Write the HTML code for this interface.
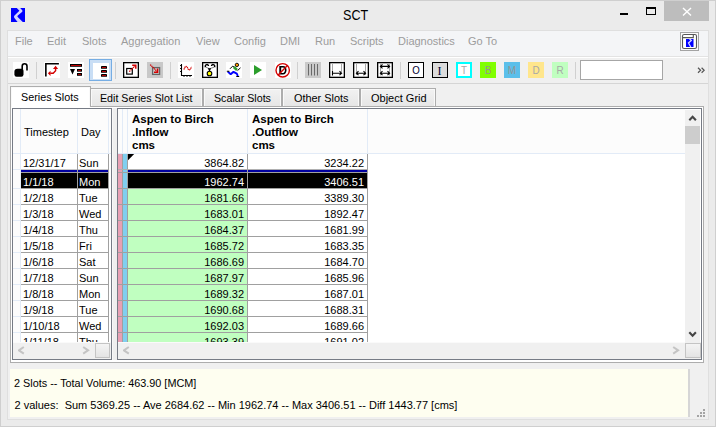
<!DOCTYPE html>
<html><head><meta charset="utf-8">
<style>
*{box-sizing:border-box;margin:0;padding:0}
html,body{width:716px;height:427px;overflow:hidden;background:#ebebeb;font-family:"Liberation Sans",sans-serif;}
.a{position:absolute}
.t{position:absolute;white-space:nowrap;line-height:1}
#win{left:0;top:0;width:716px;height:427px;border:1px solid #cfcfcf;}
.menu{font-size:11px;color:#9c9c9c;top:36px}
.sep{position:absolute;width:1px;background:#cfcfcf;top:62px;height:16px}
.ico{position:absolute;top:62px;width:16px;height:16px}
.tab{position:absolute;border:1px solid #adadad;border-bottom:none;background:linear-gradient(#f2f2f2,#e6e6e6);box-shadow:inset 1px 1px #f9f9f9,inset -1px 0 #f9f9f9;font-size:11px;color:#000}
.tab span{position:absolute;white-space:nowrap;line-height:1}
.grid{position:absolute;border:1px solid #767b85;background:#fff;overflow:hidden}
.hline{position:absolute;height:1px;background:#a0a0a0}
.vline{position:absolute;width:1px;background:#a0a0a0}
.cell{position:absolute;font-size:11px;white-space:nowrap;line-height:1}
</style></head><body>
<div id="win" class="a"></div>

<!-- title bar -->
<svg class="a" style="left:10px;top:7px" width="16" height="16" viewBox="0 0 16 16">
<rect x="1" y="1" width="14" height="14" fill="#0000ff"/>
<path d="M6.8 1 L10.2 1 L12.4 3.4 Q12.8 4.3 12 5 L7.8 8.4 Q7 9.2 7.7 10 L12.8 15 L7.6 15 L4.4 11 Q3.4 9.6 4.5 8.4 L9.4 3.8 Z" fill="#d6d6ff"/>
</svg>
<div class="t" style="left:343px;top:7px;font-size:15px;color:#000;transform:scaleX(0.84);transform-origin:0 0">SCT</div>
<div class="a" style="left:620px;top:13px;width:8px;height:2px;background:#000"></div>
<div class="a" style="left:646px;top:7px;width:10px;height:8px;border:1px solid #000;border-top-width:2px"></div>
<div class="a" style="left:664px;top:1px;width:45px;height:20px;background:#bdbdbd"></div>
<svg class="a" style="left:682px;top:7px" width="10" height="9" viewBox="0 0 10 9"><path d="M1 1 L9 8.5 M9 1 L1 8.5" stroke="#fff" stroke-width="1.4"/></svg>

<!-- menu bar -->
<div class="a" style="left:7px;top:30px;width:702px;height:390px;background:#f0f0f0;border:1px solid #dfdfdf"></div>
<div class="a" style="left:8px;top:31px;width:700px;height:25px;background:#f4f5f7"></div>
<div class="a" style="left:8px;top:56px;width:700px;height:1px;background:#e3e3e3"></div>
<div class="a" style="left:8px;top:57px;width:700px;height:1px;background:#fff"></div>
<div class="t menu" style="left:15px">File</div>
<div class="t menu" style="left:47px">Edit</div>
<div class="t menu" style="left:82px">Slots</div>
<div class="t menu" style="left:121px">Aggregation</div>
<div class="t menu" style="left:196px">View</div>
<div class="t menu" style="left:234px">Config</div>
<div class="t menu" style="left:280px">DMI</div>
<div class="t menu" style="left:315px">Run</div>
<div class="t menu" style="left:350px">Scripts</div>
<div class="t menu" style="left:398px">Diagnostics</div>
<div class="t menu" style="left:468px">Go To</div>
<div class="a" style="left:680px;top:32px;width:19px;height:19px;border:1px solid #a3a3a3;background:#fbfbfb"></div>
<svg class="a" style="left:681px;top:33px" width="17" height="17" viewBox="0 0 17 17"><rect x="1.5" y="1.5" width="14" height="14" rx="1.6" fill="#fff" stroke="#585858" stroke-width="1.1"/><path d="M1.5 4.6 H12.3 V1.5" stroke="#585858" stroke-width="1.1" fill="none"/><rect x="5" y="6" width="7.5" height="8" fill="#0000ff"/><path d="M8.6 6 L10.3 7.6 L7.5 10 L9.8 14" stroke="#d6d6ff" stroke-width="1.3" fill="none"/></svg>

<!-- toolbar -->
<div class="a" style="left:8px;top:83px;width:700px;height:1px;background:#d5d5d5"></div>
<div id="toolbar">
<div class="a" style="left:36px;top:62px;width:1px;height:17px;background:#d0d0d0"></div>
<div class="a" style="left:115px;top:62px;width:1px;height:17px;background:#d0d0d0"></div>
<div class="a" style="left:170px;top:62px;width:1px;height:17px;background:#d0d0d0"></div>
<div class="a" style="left:297px;top:62px;width:1px;height:17px;background:#d0d0d0"></div>
<div class="a" style="left:400px;top:62px;width:1px;height:17px;background:#d0d0d0"></div>
<div class="a" style="left:575px;top:62px;width:1px;height:17px;background:#d0d0d0"></div>
<svg class="a" style="left:13px;top:62px" width="16" height="16" viewBox="0 0 16 16"><rect width="16" height="16" fill="#fff"/><path d="M9.2 7.5 V4.2 A2.4 2.4 0 0 1 14 4.2 V8.6" stroke="#000" stroke-width="1.6" fill="none"/><path d="M4.5 6.7 H8.5 Q10.5 6.7 10.5 8.7 V12.6 Q10.5 14.8 8.3 14.8 H3.6 Q1.4 14.8 1.4 12.6 V10 Q1.4 6.7 4.5 6.7 Z" fill="#000"/></svg>
<svg class="a" style="left:44px;top:62px" width="16" height="16" viewBox="0 0 16 16"><rect width="16" height="16" fill="#fff"/><path d="M1.85 14.6 V1.75 H14.9" stroke="#000" stroke-width="1.6" fill="none"/><path d="M11.6 6.5 V8.8 L9.2 11.3 H6.3" stroke="#d40000" stroke-width="1.4" fill="none"/><path d="M9 6.9 L11.6 3.8 L14.1 6.9 Z M6.5 8.8 L3.9 11.35 L6.5 13.9 Z" fill="#d40000"/></svg>
<svg class="a" style="left:68px;top:62px" width="16" height="16" viewBox="0 0 16 16"><rect width="16" height="16" fill="#fff"/><rect x="2" y="2" width="12" height="2.8" fill="#000"/><rect x="3" y="3" width="10" height="0.9" fill="#d40000"/><path d="M2 7 H7 L4.5 12.5 Z" fill="#000"/><rect x="9" y="7" width="5" height="2.7" fill="#000"/><rect x="10" y="8" width="3" height="0.8" fill="#d40000"/><rect x="9" y="11" width="5" height="2.8" fill="#000"/><rect x="10" y="12" width="3" height="0.8" fill="#d40000"/></svg>
<div class="a" style="left:89px;top:59px;width:23px;height:22px;border:1px solid #76ade3;background:#c9def5"></div>
<svg class="a" style="left:93px;top:63px" width="16" height="16" viewBox="0 0 16 16"><rect width="16" height="16" fill="#fff"/><rect x="8" y="3" width="6" height="2.8" rx="0.4" fill="#000"/><rect x="9" y="4" width="4" height="0.9" fill="#d40000"/><rect x="8" y="7" width="6" height="2.8" rx="0.4" fill="#000"/><rect x="9" y="8" width="4" height="0.9" fill="#d40000"/><rect x="8" y="11" width="6" height="2.8" rx="0.4" fill="#000"/><rect x="9" y="12" width="4" height="0.9" fill="#d40000"/></svg>
<svg class="a" style="left:123px;top:62px" width="16" height="16" viewBox="0 0 16 16"><rect width="16" height="16" fill="#fff"/><rect x="0.65" y="0.65" width="14.7" height="14.7" stroke="#000" stroke-width="1.3" fill="none"/><rect x="3.7" y="6.5" width="5.6" height="5.6" stroke="#000" stroke-width="1.2" fill="none"/><path d="M6.3 9.6 L12.3 3.6" stroke="#d40000" stroke-width="1.3" stroke-dasharray="1.3 0.5"/><path d="M9.2 3.2 H12.8 V6.8" stroke="#d40000" stroke-width="1.5" fill="none"/></svg>
<svg class="a" style="left:147px;top:62px" width="16" height="16" viewBox="0 0 16 16"><rect width="16" height="16" fill="#c8c8c8"/><rect x="5.6" y="5.6" width="7" height="6.8" stroke="#646464" stroke-width="1.3" fill="#d0d0d0"/><path d="M3.2 2.6 L10 9.4" stroke="#d40000" stroke-width="1.3" stroke-dasharray="1.3 0.5"/><path d="M10.6 6.6 V10.2 H7" stroke="#d40000" stroke-width="1.5" fill="none"/></svg>
<svg class="a" style="left:178px;top:62px" width="16" height="16" viewBox="0 0 16 16"><rect width="16" height="16" fill="#fff"/><path d="M3.5 2 V13.5 H14" stroke="#000" stroke-width="1.1" fill="none"/><path d="M2 3.5 H3 M2 6.5 H3 M2 9.5 H3 M6 14 V15 M9 14 V15 M12 14 V15" stroke="#000" stroke-width="0.9" fill="none"/><path d="M5.8 7.6 C6.8 5.5 7.6 3.6 8.8 4.6 C9.8 5.6 10.2 8.6 11.6 7.8 C12.6 7.2 13 5.6 13.6 5" stroke="#d40000" stroke-width="1.2" fill="none" stroke-dasharray="1.4 0.4"/></svg>
<svg class="a" style="left:202px;top:62px" width="16" height="16" viewBox="0 0 16 16"><rect width="16" height="16" fill="#fff"/><rect x="0.65" y="0.65" width="14.7" height="14.7" stroke="#000" stroke-width="1.3" fill="none"/><path d="M3.4 5.2 C2.6 2.4 6.4 1.6 6.5 4 M12.6 5.2 C13.4 2.4 9.6 1.6 9.5 4" stroke="#000" stroke-width="1.4" fill="none"/><path d="M4 5.2 L7.5 6.8 L12 5.2" stroke="#777" stroke-width="0.9" fill="none"/><path d="M6 6.8 H9 M7.5 6.8 V9.5" stroke="#000" stroke-width="1.3" fill="none"/><circle cx="7.5" cy="11.5" r="2.3" fill="#ffff00" stroke="#000" stroke-width="1.1"/></svg>
<svg class="a" style="left:226px;top:62px" width="16" height="16" viewBox="0 0 16 16"><rect width="16" height="16" fill="#fff"/><path d="M4 6.8 L6.6 4.2 L8 5" stroke="#000" stroke-width="1" fill="none"/><path d="M11.5 8.6 L14.5 5.8" stroke="#000" stroke-width="1" fill="none"/><path d="M7.8 5 L11 8" stroke="#2e9a2e" stroke-width="2.6" fill="none"/><path d="M1.8 9.6 L4.7 12.3 L7.5 9.8 L10.8 11.6 L11.8 14" stroke="#0000ff" stroke-width="1.9" fill="none" stroke-linejoin="bevel"/><path d="M0.8 9.2 H3.4 M10.3 14.5 H13.2" stroke="#000" stroke-width="1.1" fill="none"/><circle cx="10.9" cy="2.9" r="1.7" fill="#ff9800" stroke="#000" stroke-width="0.9"/></svg>
<svg class="a" style="left:250px;top:62px" width="16" height="16" viewBox="0 0 16 16"><rect width="16" height="16" fill="#fff"/><path d="M4 3 L12 8 L4 13 Z" fill="#2c9e2c"/></svg>
<svg class="a" style="left:275px;top:62px" width="16" height="16" viewBox="0 0 16 16"><rect width="16" height="16" fill="#fff"/><path d="M4.3 4 H8 C13 4 12.5 12.5 8 12.5 H4.3 Z M6.2 5.6 V11 H8 C10.6 11 10.6 5.6 8 5.6 Z" fill="#000" fill-rule="evenodd"/><circle cx="7.7" cy="8.3" r="6.7" stroke="#d40000" stroke-width="1.4" fill="none"/><path d="M3.2 13 L12.4 3.6" stroke="#d40000" stroke-width="1.4"/></svg>
<svg class="a" style="left:305px;top:62px" width="16" height="16" viewBox="0 0 16 16"><rect width="16" height="16" fill="#cacaca"/><path d="M3.5 2 V13.5 M6.5 2 V13.5 M9.5 2 V13.5 M12.5 2 V13.5" stroke="#6a6a6a" stroke-width="1"/></svg>
<svg class="a" style="left:329px;top:62px" width="16" height="16" viewBox="0 0 16 16"><rect width="16" height="16" fill="#fff"/><rect x="0.65" y="0.65" width="14.7" height="14.7" stroke="#000" stroke-width="1.3" fill="none"/><path d="M3.5 2 V9 M12.5 2 V10" stroke="#a8a8a8" stroke-width="1"/><path d="M3.5 9 V13.5 M3.5 11.2 H12.5 M10.5 9.2 L12.6 11.2 L10.5 13.2" stroke="#000" stroke-width="1.1" fill="none"/></svg>
<svg class="a" style="left:353px;top:62px" width="16" height="16" viewBox="0 0 16 16"><rect width="16" height="16" fill="#fff"/><rect x="0.65" y="0.65" width="14.7" height="14.7" stroke="#000" stroke-width="1.3" fill="none"/><path d="M3.5 2 V13 M12.5 2 V13" stroke="#a8a8a8" stroke-width="1"/><path d="M3.5 11.2 H12.5 M5.5 9.2 L3.4 11.2 L5.5 13.2 M10.5 9.2 L12.6 11.2 L10.5 13.2" stroke="#000" stroke-width="1.1" fill="none"/></svg>
<svg class="a" style="left:377px;top:62px" width="16" height="16" viewBox="0 0 16 16"><rect width="16" height="16" fill="#fff"/><rect x="0.65" y="0.65" width="14.7" height="14.7" stroke="#000" stroke-width="1.3" fill="none"/><path d="M3.5 2 V13.5 M12.5 2 V13.5" stroke="#a8a8a8" stroke-width="1"/><path d="M3.5 4.4 H12.5 M5.5 2.4 L3.4 4.4 L5.5 6.4 M10.5 2.4 L12.6 4.4 L10.5 6.4" stroke="#000" stroke-width="1.1" fill="none"/><path d="M3.5 11.2 H12.5 M5.5 9.2 L3.4 11.2 L5.5 13.2 M10.5 9.2 L12.6 11.2 L10.5 13.2" stroke="#000" stroke-width="1.1" fill="none"/></svg>
<div class="a" style="left:408px;top:62px;width:16px;height:16px;background:#fff;border:1.3px solid #000;"></div>
<div class="t" style="left:407.5px;top:65px;width:16px;text-align:center;font-family:'Liberation Sans',sans-serif;font-size:11px;color:#000030;font-weight:normal;transform:scaleX(0.88)">O</div>
<div class="a" style="left:432px;top:62px;width:16px;height:16px;background:#dcdcdc;border:1.3px solid #000;"></div>
<div class="t" style="left:431.4px;top:64.5px;width:16px;text-align:center;font-family:'Liberation Serif',serif;font-size:12px;color:#000030;font-weight:normal;transform:scaleX(1)">I</div>
<div class="a" style="left:456px;top:62px;width:16px;height:16px;background:#fff;border:2px solid #00ffff;"></div>
<div class="t" style="left:456px;top:65px;width:16px;text-align:center;font-family:'Liberation Sans',sans-serif;font-size:11px;color:#a8a8a8;font-weight:normal;transform:scaleX(0.9)">T</div>
<div class="a" style="left:480px;top:62px;width:16px;height:16px;background:#80ff00;"></div>
<div class="t" style="left:480px;top:65px;width:16px;text-align:center;font-family:'Liberation Sans',sans-serif;font-size:11px;color:#959595;font-weight:normal;transform:scaleX(0.9)">B</div>
<div class="a" style="left:504px;top:62px;width:16px;height:16px;background:#5bbfea;"></div>
<div class="t" style="left:504px;top:65px;width:16px;text-align:center;font-family:'Liberation Sans',sans-serif;font-size:11px;color:#959595;font-weight:normal;transform:scaleX(0.9)">M</div>
<div class="a" style="left:528px;top:62px;width:16px;height:16px;background:#ffe68c;"></div>
<div class="t" style="left:528px;top:65px;width:16px;text-align:center;font-family:'Liberation Sans',sans-serif;font-size:11px;color:#a8a8a8;font-weight:normal;transform:scaleX(0.9)">D</div>
<div class="a" style="left:552px;top:62px;width:16px;height:16px;background:#c0ffc0;"></div>
<div class="t" style="left:552px;top:65px;width:16px;text-align:center;font-family:'Liberation Sans',sans-serif;font-size:11px;color:#a8a8a8;font-weight:normal;transform:scaleX(0.9)">R</div>
<div class="a" style="left:580px;top:60px;width:83px;height:20px;border:1px solid #a6a6a6;background:#fff"></div>
<svg class="a" style="left:697px;top:67px" width="8" height="7" viewBox="0 0 8 7"><path d="M1 0.8 L3.6 3.3 L1 5.8 M4.6 0.8 L7.2 3.3 L4.6 5.8" stroke="#555" stroke-width="1.2" fill="none"/></svg>
</div><!--/tb-->

<!-- main area -->

<!-- tab page -->
<div class="a" style="left:10px;top:106px;width:694px;height:257px;background:#fff;border:1px solid #adadad"></div>
<div class="tab" style="left:90px;top:88px;width:113px;height:18px"><span style="left:8.5px;top:4px;transform:scaleX(0.969);transform-origin:0 0">Edit Series Slot List</span></div>
<div class="tab" style="left:203px;top:88px;width:79px;height:18px"><span style="left:9.7px;top:4px;transform:scaleX(0.97);transform-origin:0 0">Scalar Slots</span></div>
<div class="tab" style="left:282px;top:88px;width:78px;height:18px"><span style="left:10.6px;top:4px;transform:scaleX(0.99);transform-origin:0 0">Other Slots</span></div>
<div class="tab" style="left:360px;top:88px;width:76px;height:18px"><span style="left:10px;top:4px">Object Grid</span></div>
<div class="tab" style="left:10px;top:86px;width:81px;height:21px;background:#fff"><span style="left:9.5px;top:5px;transform:scaleX(0.98);transform-origin:0 0">Series Slots</span></div>

<div class="a" style="left:112px;top:108px;width:5px;height:252px;background:#efefef;border-left:1px solid #f8f8f8"></div>
<!-- left grid -->
<div class="grid" style="left:12px;top:108px;width:100px;height:252px" id="lg">
<div class="a" style="left:0px;top:0px;width:98px;height:44px;background:#fcfcfc;"></div>
<div class="a" style="left:0px;top:44px;width:98px;height:1px;background:#e2ebf7;"></div>
<div class="a" style="left:7px;top:0px;width:1px;height:233px;background:#e2ebf7;"></div>
<div class="a" style="left:64px;top:0px;width:1px;height:44px;background:#e2ebf7;"></div>
<div class="a" style="left:95px;top:0px;width:1px;height:44px;background:#e2ebf7;"></div>
<div class="a" style="left:0px;top:45px;width:7px;height:188px;background:#fcfcfc;"></div>
<div class="a" style="left:0px;top:60px;width:7px;height:1px;background:#e2ebf7;"></div>
<div class="a" style="left:0px;top:79px;width:7px;height:1px;background:#e2ebf7;"></div>
<div class="a" style="left:0px;top:95px;width:7px;height:1px;background:#e2ebf7;"></div>
<div class="a" style="left:0px;top:111px;width:7px;height:1px;background:#e2ebf7;"></div>
<div class="a" style="left:0px;top:127px;width:7px;height:1px;background:#e2ebf7;"></div>
<div class="a" style="left:0px;top:143px;width:7px;height:1px;background:#e2ebf7;"></div>
<div class="a" style="left:0px;top:159px;width:7px;height:1px;background:#e2ebf7;"></div>
<div class="a" style="left:0px;top:175px;width:7px;height:1px;background:#e2ebf7;"></div>
<div class="a" style="left:0px;top:191px;width:7px;height:1px;background:#e2ebf7;"></div>
<div class="a" style="left:0px;top:207px;width:7px;height:1px;background:#e2ebf7;"></div>
<div class="a" style="left:0px;top:223px;width:7px;height:1px;background:#e2ebf7;"></div>
<div class="cell" style="left:11px;top:18px;color:#000;">Timestep</div>
<div class="cell" style="left:68px;top:18px;color:#000;">Day</div>
<div class="a" style="left:8px;top:64px;width:88px;height:15px;background:#000;"></div>
<div class="a" style="left:8px;top:60px;width:88px;height:1px;background:#c8c8c8;"></div>
<div class="a" style="left:8px;top:61px;width:88px;height:2px;background:#0000a0;"></div>
<div class="a" style="left:8px;top:63px;width:88px;height:1px;background:#a0a0a0;"></div>
<div class="a" style="left:8px;top:79px;width:88px;height:1px;background:#a0a0a0;"></div>
<div class="a" style="left:8px;top:95px;width:88px;height:1px;background:#a0a0a0;"></div>
<div class="a" style="left:8px;top:111px;width:88px;height:1px;background:#a0a0a0;"></div>
<div class="a" style="left:8px;top:127px;width:88px;height:1px;background:#a0a0a0;"></div>
<div class="a" style="left:8px;top:143px;width:88px;height:1px;background:#a0a0a0;"></div>
<div class="a" style="left:8px;top:159px;width:88px;height:1px;background:#a0a0a0;"></div>
<div class="a" style="left:8px;top:175px;width:88px;height:1px;background:#a0a0a0;"></div>
<div class="a" style="left:8px;top:191px;width:88px;height:1px;background:#a0a0a0;"></div>
<div class="a" style="left:8px;top:207px;width:88px;height:1px;background:#a0a0a0;"></div>
<div class="a" style="left:8px;top:223px;width:88px;height:1px;background:#a0a0a0;"></div>
<div class="a" style="left:64px;top:45px;width:1px;height:188px;background:#a0a0a0;"></div>
<div class="a" style="left:95px;top:45px;width:1px;height:188px;background:#a0a0a0;"></div>
<div class="cell" style="left:10px;top:49px;color:#000;">12/31/17</div>
<div class="cell" style="left:66px;top:49px;color:#000;">Sun</div>
<div class="cell" style="left:10px;top:68px;color:#fff;">1/1/18</div>
<div class="cell" style="left:66px;top:68px;color:#fff;">Mon</div>
<div class="cell" style="left:10px;top:84px;color:#000;">1/2/18</div>
<div class="cell" style="left:66px;top:84px;color:#000;">Tue</div>
<div class="cell" style="left:10px;top:100px;color:#000;">1/3/18</div>
<div class="cell" style="left:66px;top:100px;color:#000;">Wed</div>
<div class="cell" style="left:10px;top:116px;color:#000;">1/4/18</div>
<div class="cell" style="left:66px;top:116px;color:#000;">Thu</div>
<div class="cell" style="left:10px;top:132px;color:#000;">1/5/18</div>
<div class="cell" style="left:66px;top:132px;color:#000;">Fri</div>
<div class="cell" style="left:10px;top:148px;color:#000;">1/6/18</div>
<div class="cell" style="left:66px;top:148px;color:#000;">Sat</div>
<div class="cell" style="left:10px;top:164px;color:#000;">1/7/18</div>
<div class="cell" style="left:66px;top:164px;color:#000;">Sun</div>
<div class="cell" style="left:10px;top:180px;color:#000;">1/8/18</div>
<div class="cell" style="left:66px;top:180px;color:#000;">Mon</div>
<div class="cell" style="left:10px;top:196px;color:#000;">1/9/18</div>
<div class="cell" style="left:66px;top:196px;color:#000;">Tue</div>
<div class="cell" style="left:10px;top:212px;color:#000;">1/10/18</div>
<div class="cell" style="left:66px;top:212px;color:#000;">Wed</div>
<div class="cell" style="left:10px;top:228px;color:#000;">1/11/18</div>
<div class="cell" style="left:66px;top:228px;color:#000;">Thu</div>
<div class="a" style="left:0px;top:233px;width:98px;height:17px;background:#f0f0f0;"></div>
<div class="a" style="left:0px;top:233px;width:98px;height:1px;background:#fafafa;"></div>
<div class="a" style="left:82px;top:234px;width:15px;height:15px;background:linear-gradient(#f4f4f4,#e4e4e4);border:1px solid #c4c4c4;box-sizing:border-box"></div>
<svg class="a" style="left:5px;top:237px" width="8" height="9" viewBox="0 0 8 9"><path d="M5.8 1 L0.9 4.3 L5.8 7.6" stroke="#c4c4c4" stroke-width="2" fill="none"/></svg>
<svg class="a" style="left:69px;top:237px" width="8" height="9" viewBox="0 0 8 9"><path d="M1.2 1 L6.1 4.3 L1.2 7.6" stroke="#c4c4c4" stroke-width="2" fill="none"/></svg>
</div><!--/lg-->
<!-- right grid -->
<div class="grid" style="left:117px;top:108px;width:585px;height:252px" id="rg">
<div class="a" style="left:0px;top:0px;width:567px;height:44px;background:#fcfcfc;"></div>
<div class="a" style="left:0px;top:44px;width:567px;height:1px;background:#e2ebf7;"></div>
<div class="a" style="left:4px;top:0px;width:1px;height:44px;background:#e2ebf7;"></div>
<div class="a" style="left:9px;top:0px;width:1px;height:44px;background:#e2ebf7;"></div>
<div class="a" style="left:129px;top:0px;width:1px;height:44px;background:#e2ebf7;"></div>
<div class="a" style="left:249px;top:0px;width:1px;height:44px;background:#e2ebf7;"></div>
<div class="cell" style="left:14px;top:6px;color:#000;font-weight:bold;font-size:11.5px;line-height:13px;top:4px">Aspen to Birch<br>.Inflow<br>cms</div>
<div class="cell" style="left:134px;top:6px;color:#000;font-weight:bold;font-size:11.5px;line-height:13px;top:4px">Aspen to Birch<br>.Outflow<br>cms</div>
<div class="a" style="left:0px;top:45px;width:4px;height:188px;background:#e8a0b4;"></div>
<div class="a" style="left:5px;top:45px;width:4px;height:188px;background:#80cff0;"></div>
<div class="a" style="left:4px;top:45px;width:1px;height:188px;background:#a0a0a0;"></div>
<div class="a" style="left:9px;top:45px;width:1px;height:188px;background:#a0a0a0;"></div>
<div class="a" style="left:10px;top:80px;width:119px;height:153px;background:#c0ffc0;"></div>
<div class="a" style="left:10px;top:64px;width:239px;height:15px;background:#000;"></div>
<div class="a" style="left:0px;top:60px;width:249px;height:1px;background:#b0b0b0;"></div>
<div class="a" style="left:10px;top:61px;width:239px;height:2px;background:#0000a0;"></div>
<div class="a" style="left:0px;top:63px;width:249px;height:1px;background:#a0a0a0;"></div>
<div class="a" style="left:0px;top:79px;width:249px;height:1px;background:#a0a0a0;"></div>
<div class="a" style="left:0px;top:95px;width:249px;height:1px;background:#a0a0a0;"></div>
<div class="a" style="left:0px;top:111px;width:249px;height:1px;background:#a0a0a0;"></div>
<div class="a" style="left:0px;top:127px;width:249px;height:1px;background:#a0a0a0;"></div>
<div class="a" style="left:0px;top:143px;width:249px;height:1px;background:#a0a0a0;"></div>
<div class="a" style="left:0px;top:159px;width:249px;height:1px;background:#a0a0a0;"></div>
<div class="a" style="left:0px;top:175px;width:249px;height:1px;background:#a0a0a0;"></div>
<div class="a" style="left:0px;top:191px;width:249px;height:1px;background:#a0a0a0;"></div>
<div class="a" style="left:0px;top:207px;width:249px;height:1px;background:#a0a0a0;"></div>
<div class="a" style="left:0px;top:223px;width:249px;height:1px;background:#a0a0a0;"></div>
<div class="a" style="left:129px;top:45px;width:1px;height:188px;background:#a0a0a0;"></div>
<div class="a" style="left:249px;top:45px;width:1px;height:188px;background:#a0a0a0;"></div>
<svg class="a" style="left:10px;top:45px" width="7" height="7" viewBox="0 0 7 7"><path d="M0 0 H6.2 L0 6.2 Z" fill="#000"/></svg>
<div class="cell" style="right:457px;top:49px;color:#000;">3864.82</div>
<div class="cell" style="right:337px;top:49px;color:#000;">3234.22</div>
<div class="cell" style="right:457px;top:68px;color:#fff;">1962.74</div>
<div class="cell" style="right:337px;top:68px;color:#fff;">3406.51</div>
<div class="cell" style="right:457px;top:84px;color:#000;">1681.66</div>
<div class="cell" style="right:337px;top:84px;color:#000;">3389.30</div>
<div class="cell" style="right:457px;top:100px;color:#000;">1683.01</div>
<div class="cell" style="right:337px;top:100px;color:#000;">1892.47</div>
<div class="cell" style="right:457px;top:116px;color:#000;">1684.37</div>
<div class="cell" style="right:337px;top:116px;color:#000;">1681.99</div>
<div class="cell" style="right:457px;top:132px;color:#000;">1685.72</div>
<div class="cell" style="right:337px;top:132px;color:#000;">1683.35</div>
<div class="cell" style="right:457px;top:148px;color:#000;">1686.69</div>
<div class="cell" style="right:337px;top:148px;color:#000;">1684.70</div>
<div class="cell" style="right:457px;top:164px;color:#000;">1687.97</div>
<div class="cell" style="right:337px;top:164px;color:#000;">1685.96</div>
<div class="cell" style="right:457px;top:180px;color:#000;">1689.32</div>
<div class="cell" style="right:337px;top:180px;color:#000;">1687.01</div>
<div class="cell" style="right:457px;top:196px;color:#000;">1690.68</div>
<div class="cell" style="right:337px;top:196px;color:#000;">1688.31</div>
<div class="cell" style="right:457px;top:212px;color:#000;">1692.03</div>
<div class="cell" style="right:337px;top:212px;color:#000;">1689.66</div>
<div class="cell" style="right:457px;top:228px;color:#000;">1693.39</div>
<div class="cell" style="right:337px;top:228px;color:#000;">1691.02</div>
<div class="a" style="left:567px;top:0px;width:16px;height:234px;background:#fff;"></div>
<div class="a" style="left:567px;top:1px;width:15px;height:232px;background:#f0f0f0;"></div>
<div class="a" style="left:567px;top:17px;width:15px;height:18px;background:#cdcdcd;"></div>
<svg class="a" style="left:570px;top:5px" width="10" height="8" viewBox="0 0 10 8"><path d="M1.3 6.2 L4.6 2.7 L7.9 6.2" stroke="#454545" stroke-width="2.1" fill="none"/></svg>
<svg class="a" style="left:570px;top:221px" width="10" height="8" viewBox="0 0 10 8"><path d="M1.3 2.3 L4.6 5.8 L7.9 2.3" stroke="#454545" stroke-width="2.1" fill="none"/></svg>
<div class="a" style="left:0px;top:233px;width:567px;height:17px;background:#f0f0f0;"></div>
<div class="a" style="left:0px;top:233px;width:567px;height:1px;background:#fafafa;"></div>
<div class="a" style="left:567px;top:233px;width:16px;height:17px;background:#f0f0f0;"></div>
<div class="a" style="left:567px;top:234px;width:16px;height:15px;background:linear-gradient(#f4f4f4,#e4e4e4);border:1px solid #c4c4c4;box-sizing:border-box"></div>
<svg class="a" style="left:5px;top:237px" width="8" height="9" viewBox="0 0 8 9"><path d="M5.8 1 L0.9 4.3 L5.8 7.6" stroke="#c4c4c4" stroke-width="2" fill="none"/></svg>
<svg class="a" style="left:554px;top:237px" width="8" height="9" viewBox="0 0 8 9"><path d="M1.2 1 L6.1 4.3 L1.2 7.6" stroke="#c4c4c4" stroke-width="2" fill="none"/></svg>
</div><!--/rg-->

<!-- status -->
<div class="a" style="left:10px;top:369px;width:679px;height:48px;background:#fefef0"></div>
<div class="a" style="left:688px;top:369px;width:2px;height:48px;background:#d6d6d6"></div>
<div class="a" style="left:697px;top:415px;width:2px;height:2px;background:#a4a4a4"></div><div class="a" style="left:700px;top:415px;width:2px;height:2px;background:#a4a4a4"></div><div class="a" style="left:703px;top:415px;width:2px;height:2px;background:#a4a4a4"></div><div class="a" style="left:700px;top:412px;width:2px;height:2px;background:#a4a4a4"></div><div class="a" style="left:703px;top:412px;width:2px;height:2px;background:#a4a4a4"></div><div class="a" style="left:703px;top:409px;width:2px;height:2px;background:#a4a4a4"></div>
<div class="t" style="left:13.8px;top:378px;font-size:11px;transform:scaleX(0.985);transform-origin:0 0">2 Slots -- Total Volume: 463.90 [MCM]</div>
<div class="t" style="left:14.5px;top:400px;font-size:11px">2 values:&nbsp; Sum 5369.25 -- Ave 2684.62 -- Min 1962.74 -- Max 3406.51 -- Diff 1443.77 [cms]</div>

</body></html>
